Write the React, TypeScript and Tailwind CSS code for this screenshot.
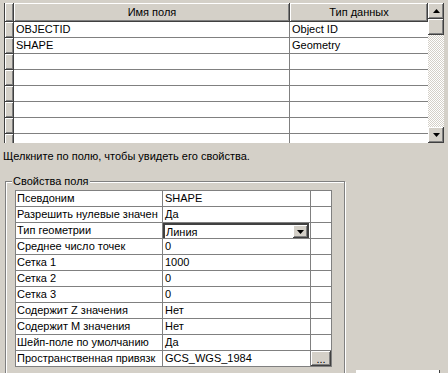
import React from "react";

const bevel =
  "bg-[#d4d0c8] shadow-[inset_-1px_-1px_#404040,inset_1px_1px_#ffffff,inset_-2px_-2px_#808080]";

function Tri({ up }: { up?: boolean }) {
  return (
    <svg width="7" height="4" viewBox="0 0 7 4">
      {up ? <path d="M3.5 0 L7 4 L0 4 Z" fill="#000" /> : <path d="M0 0 L7 0 L3.5 4 Z" fill="#000" />}
    </svg>
  );
}

const fields = [
  ["OBJECTID", "Object ID"],
  ["SHAPE", "Geometry"],
  ["", ""],
  ["", ""],
  ["", ""],
  ["", ""],
  ["", ""],
  ["", ""],
];

const props: [string, string][] = [
  ["Псевдоним", "SHAPE"],
  ["Разрешить нулевые значен", "Да"],
  ["Тип геометрии", "Линия"],
  ["Среднее число точек", "0"],
  ["Сетка 1", "1000"],
  ["Сетка 2", "0"],
  ["Сетка 3", "0"],
  ["Содержит Z значения", "Нет"],
  ["Содержит M значения", "Нет"],
  ["Шейп-поле по умолчанию", "Да"],
  ["Пространственная привязк", "GCS_WGS_1984"],
];

export default function App() {
  return (
    <div className="w-[448px] h-[373px] overflow-hidden bg-[#d4d0c8] font-['Liberation_Sans',Arial,sans-serif] text-[11px] text-black">
      {/* Таблица полей */}
      <div className="ml-[4px] mt-[3px] flex h-[140px] w-[440px]">
        <div className="w-[424px] h-full overflow-hidden bg-white border-l border-[#404040]">
          <div className="flex h-[19px]">
            <div className={`w-[9px] ${bevel}`} />
            <div className={`w-[276px] flex items-center justify-center ${bevel}`}>Имя поля</div>
            <div className={`flex-1 flex items-center justify-center ${bevel}`}>Тип данных</div>
          </div>
          {fields.map((f, i) => (
            <div key={i} className="flex h-[16px]">
              <div className={`w-[9px] ${bevel}`} />
              <div className="w-[276px] border-b border-r border-[#808080] pl-[2px] leading-[15px] whitespace-nowrap">
                {f[0]}
              </div>
              <div className="flex-1 border-b border-[#808080] pl-[2px] leading-[15px] whitespace-nowrap">
                {f[1]}
              </div>
            </div>
          ))}
        </div>
        <div className="w-[16px] h-full flex flex-col">
          <div className={`h-[16px] flex items-center justify-center ${bevel}`}>
            <Tri up />
          </div>
          <div className={`h-[16px] ${bevel}`} />
          <div className="flex-1 bg-[repeating-conic-gradient(#d4d0c8_0%_25%,#ffffff_0%_50%)] bg-[length:2px_2px]" />
          <div className={`h-[16px] flex items-center justify-center ${bevel}`}>
            <Tri />
          </div>
        </div>
      </div>

      <div className="mt-[7px] pl-[3px] h-[13px] leading-[13px] whitespace-nowrap">
        Щелкните по полю, чтобы увидеть его свойства.
      </div>

      {/* Свойства поля */}
      <div className="flex mt-[18px]">
        <div className="ml-[5px] w-[340px] h-[200px] border border-[#808080] shadow-[inset_1px_1px_#ffffff,1px_1px_#ffffff]">
          <div className="-mt-[7px] ml-[6px] w-fit px-[1px] h-[13px] leading-[13px] bg-[#d4d0c8]">Свойства поля</div>
          <div className="ml-[9px] mt-[2px] w-[317px] bg-white border-l border-t border-r border-[#808080]">
            {props.map(([name, value], i) => (
              <div key={i} className="flex h-[16px] border-b border-[#808080]">
                <div className="w-[147px] border-r border-[#808080] pl-[1px] leading-[15px] whitespace-nowrap overflow-hidden">
                  {name}
                </div>
                {i === 2 ? (
                  <div className="w-[148px] border-r border-[#808080] flex">
                    <div className="w-[146px] flex border-t-2 border-l-2 border-t-[#404040] border-l-[#404040] border-r border-r-[#404040]">
                      <div className="flex-1 pl-[1px] leading-[14px]">{value}</div>
                      <div className={`w-[15px] flex items-center justify-center ${bevel}`}>
                        <Tri />
                      </div>
                    </div>
                  </div>
                ) : (
                  <div className="w-[148px] border-r border-[#808080] pl-[2px] leading-[15px] whitespace-nowrap overflow-hidden">
                    {value}
                  </div>
                )}
                {i === props.length - 1 ? (
                  <div className={`w-[20px] flex items-end justify-center pb-[2px] leading-[10px] ${bevel}`}>...</div>
                ) : (
                  <div className="w-[20px]" />
                )}
              </div>
            ))}
          </div>
        </div>
        <div className="ml-[11px] mt-[189px] w-[84px] h-[10px] bg-white border-r border-[#404040]" />
      </div>
    </div>
  );
}
